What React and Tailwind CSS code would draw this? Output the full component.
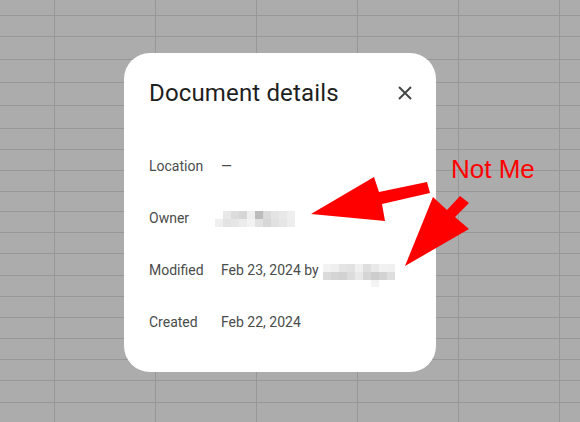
const rowHeights = [16, 21, 23, 23, 23, 23, 21, 21, 21, 20, 21, 21, 22, 21, 21, 21, 21, 21, 22, 21];
const colWidths = [55, 101, 101, 101, 101, 101, 101];

const rows = [
  { label: 'Location', value: '—' },
  { label: 'Owner', value: 'owner' },
  { label: 'Modified', value: 'modified' },
  { label: 'Created', value: 'Feb 22, 2024' },
];

// pixelated name blocks (redacted)
const ownerTop = ['#ffffff', '#e8e8e8', '#dcdcdc', '#d6d6d6', '#efefef', '#bcbcbc', '#dadada', '#e4e4e4', '#e8e8e8', '#eeeeee'];
const ownerBottom = ['#efefef', '#e3e3e3', '#e6e6e6', '#ececec', '#f3f3f3', '#e2e2e2', '#d7d7d7', '#e1e1e1', '#e6e6e6', '#ededed'];
const modTop = ['#f2f2f2', '#efefef', '#e4e4e4', '#e2e2e2', '#f0f0f0', '#dedede', '#e9e9e9', '#f1f1f1', '#f0f0f0'];
const modBottom = ['#dadada', '#d4d4d4', '#d2d2d2', '#dcdcdc', '#e8e8e8', '#d5d5d5', '#cdcdcd', '#d3d3d3', '#dedede'];

function Pixels({ top, bottom, cell = 8, h = 8, extra }) {
  return (
    <div className="relative flex flex-col">
      <div className="flex">
        {top.map((c, i) => (
          <div key={i} style={{ backgroundColor: c, width: cell, height: h }} />
        ))}
      </div>
      <div className="flex">
        {bottom.map((c, i) => (
          <div key={i} style={{ backgroundColor: c, width: cell, height: h }} />
        ))}
      </div>
      {extra && (
        <div className="absolute bg-[#f3f3f3]" style={{ left: extra, top: h * 2, width: cell, height: h }} />
      )}
    </div>
  );
}

export default function App() {
  return (
    <div className="relative w-[580px] h-[422px] overflow-hidden bg-[#acacac]">
      {/* spreadsheet grid */}
      <div className="flex flex-col">
        {rowHeights.map((h, r) => (
          <div key={r} className="flex border-b border-[#979797]" style={{ height: h }}>
            {colWidths.map((w, c) => (
              <div key={c} className="shrink-0 border-r border-[#979797]" style={{ width: w }} />
            ))}
          </div>
        ))}
      </div>

      {/* dialog */}
      <div
        className="absolute left-[124px] top-[53px] w-[312px] h-[319px] bg-white rounded-[26px] pl-[25px] pr-[25px] pt-[24px]"
        style={{ fontFamily: 'Roboto, "Liberation Sans", sans-serif' }}
      >
        <div className="flex items-center justify-between h-[32px]">
          <h1 className="text-[24px] text-[#1f1f1f] tracking-[0.15px]" style={{ fontFamily: 'Roboto, sans-serif' }}>
            Document details
          </h1>
          <svg width="24" height="24" viewBox="0 0 24 24" className="mr-[-6px]">
            <path d="M6 6 L18 18 M18 6 L6 18" stroke="#444746" strokeWidth="2" />
          </svg>
        </div>
        <div className="flex flex-col mt-[31px]">
          {rows.map((r) => (
            <div key={r.label} className="flex items-center h-[52px] text-[14px] text-[#4a4c4b]">
              <div className="w-[72px] shrink-0">{r.label}</div>
              {r.value === 'owner' ? (
                <div className="ml-[-6px] mt-[1px]">
                  <Pixels top={ownerTop} bottom={ownerBottom} />
                </div>
              ) : r.value === 'modified' ? (
                <div className="flex items-center">
                  <span>Feb 23, 2024 by</span>
                  <div className="ml-[4px] mt-[4px]">
                    <Pixels top={modTop} bottom={modBottom} h={7.7} extra={48} />
                  </div>
                </div>
              ) : (
                <span>{r.value}</span>
              )}
            </div>
          ))}
        </div>
      </div>

      {/* annotations */}
      <svg className="absolute left-0 top-0" width="580" height="422" viewBox="0 0 580 422">
        <polygon points="311,214 374,177 379,192 427,182 430,193 382,204 385,221" fill="#ff0000" />
        <polygon points="405,266 433,197 447,210 460,196 469,203 455,217 469,229" fill="#ff0000" />
      </svg>
      <div
        className="absolute left-[451px] top-[153px] text-[26px] leading-[32px] text-[#ff0000]"
        style={{ fontFamily: '"Liberation Sans", Arial, sans-serif' }}
      >
        Not Me
      </div>
    </div>
  );
}
